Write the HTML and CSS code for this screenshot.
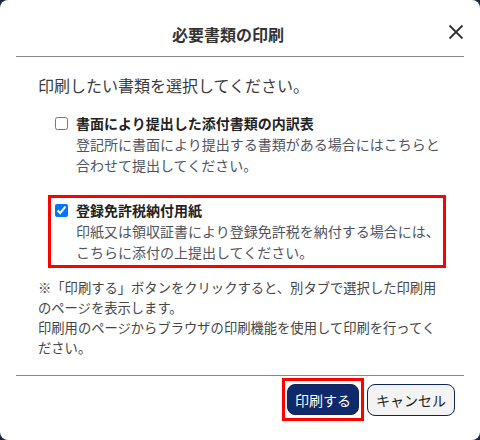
FILE: index.html
```html
<!DOCTYPE html>
<html lang="ja">
<head>
    <meta charset="UTF-8">
    <meta name="viewport" content="width=device-width, initial-scale=1.0">
    <title>必要書類の印刷</title>
    <link rel="stylesheet" href="styles.css">
</head>
<body>
    <div class="dialog">
        <div class="dialog-header">
            <h2 class="dialog-title">必要書類の印刷</h2>
            <button class="close-btn" aria-label="閉じる">
                <svg width="16" height="16" viewBox="0 0 16 16">
                    <path d="M1.5 1.5 L14.5 14.5 M14.5 1.5 L1.5 14.5" stroke="#333" stroke-width="1.8" fill="none"/>
                </svg>
            </button>
        </div>

        <div class="dialog-body">
            <p class="intro">印刷したい書類を選択してください。</p>

            <label class="doc-item">
                <input type="checkbox">
                <span class="doc-text">
                    <span class="doc-label">書面により提出した添付書類の内訳表</span>
                    <span class="doc-desc">登記所に書面により提出する書類がある場合にはこちらと合わせて提出してください。</span>
                </span>
            </label>

            <label class="doc-item highlight">
                <input type="checkbox" checked>
                <span class="doc-text">
                    <span class="doc-label">登録免許税納付用紙</span>
                    <span class="doc-desc">印紙又は領収証書により登録免許税を納付する場合には、こちらに添付の上提出してください。</span>
                </span>
            </label>

            <div class="notes">
                <p>※「印刷する」ボタンをクリックすると、別タブで選択した印刷用のページを表示します。</p>
                <p>印刷用のページからブラウザの印刷機能を使用して印刷を行ってください。</p>
            </div>
        </div>

        <div class="dialog-footer">
            <span class="btn-mark">
                <button class="btn btn-primary">印刷する</button>
            </span>
            <button class="btn btn-secondary">キャンセル</button>
        </div>
    </div>
</body>
</html>
```

FILE: styles.css
```css
* {
    margin: 0;
    padding: 0;
    box-sizing: border-box;
    font-family: "Noto Sans CJK JP", "Noto Sans", sans-serif;
}

body {
    background-color: #1d2540;
    color: #333;
}

.dialog {
    width: 480px;
    height: 440px;
    background: #fff;
    border-radius: 8px;
    overflow: hidden;
}

.dialog-header {
    display: flex;
    align-items: center;
    margin: 0 16px;
    padding: 22px 0 10px;
    border-bottom: 1px solid #888;
}

.dialog-title {
    flex: 1;
    text-align: center;
    font-size: 16px;
    font-weight: 700;
    line-height: 24px;
    color: #333;
}

.close-btn {
    width: 24px;
    height: 24px;
    border: none;
    background: none;
    display: flex;
    align-items: center;
    justify-content: flex-end;
    margin-top: -4px;
    cursor: pointer;
}

.dialog-body {
    padding: 18px 34px 17px 38px;
    font-size: 14px;
    line-height: 21px;
}

.intro {
    font-size: 16px;
    color: #3c3c3c;
    margin-bottom: 12px;
}

.doc-item {
    display: flex;
    align-items: flex-start;
    margin-left: 10px;
    padding: 2px 0;
    border: 3px solid transparent;
    cursor: pointer;
}

.doc-item + .doc-item {
    margin-top: 14px;
}

.doc-item.highlight {
    border-color: #f00;
}

.doc-item input {
    width: 13px;
    height: 13px;
    margin: 4px 8px 0 4px;
    flex-shrink: 0;
}

.doc-text {
    display: flex;
    flex-direction: column;
}

.doc-label {
    font-weight: 700;
    color: #222;
}

.doc-desc {
    color: #50535e;
}

.notes {
    margin-top: 10px;
    font-size: 13.3px;
    line-height: 20px;
    color: #444;
}

.dialog-footer {
    display: flex;
    justify-content: flex-end;
    align-items: center;
    gap: 3px;
    margin: 0 16px;
    padding: 2px 9px 0;
    border-top: 1px solid #888;
}

.btn-mark {
    display: inline-flex;
    border: 3px solid #f00;
    padding: 3px 2px;
}

.btn {
    height: 31px;
    padding: 0 7px;
    font-size: 14px;
    border-radius: 8px;
    border: 1px solid #0f2458;
    cursor: pointer;
}

.btn-primary {
    background: #10296b;
    color: #fff;
}

.btn-secondary {
    height: 32px;
    padding: 0 8px;
    background: #f3f3f3;
    color: #222;
}
```
